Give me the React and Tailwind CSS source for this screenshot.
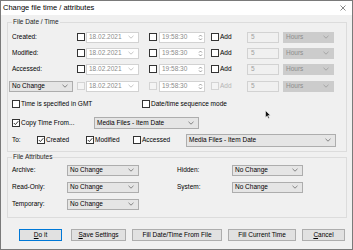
const Chevron = ({ color = '#6b6b6b' }) => (
  <svg width="6" height="4" viewBox="0 0 6 4" className="shrink-0">
    <path d="M0.5 0.8 L3 3.2 L5.5 0.8" fill="none" stroke={color} strokeWidth="0.8" />
  </svg>
)

const Box = ({ checked, disabled }) => (
  <span
    className={
      'w-[8px] h-[8px] shrink-0 border flex items-center justify-center ' +
      (disabled ? 'border-[#d4d4d4] bg-[#f4f4f4]' : 'border-[#333] bg-white')
    }
  >
    {checked && (
      <svg width="6" height="6" viewBox="0 0 6 6">
        <path d="M0.8 3 L2.4 4.6 L5.3 1.2" fill="none" stroke="#222" strokeWidth="0.9" />
      </svg>
    )}
  </span>
)

const Select = ({ text, w, h = 'h-[11px]', muted, className = '' }) => (
  <div
    className={
      'flex items-center justify-between shrink-0 border pl-[2px] pr-[4px] ' + h + ' ' + w + ' ' +
      (muted ? 'bg-[#cccccc] border-[#cccccc] text-[#8d8d8d] ' : 'bg-[#e5e5e5] border-[#adadad] text-black ') +
      className
    }
  >
    <span className="leading-none">{text}</span>
    <Chevron color={muted ? '#9a9a9a' : '#6b6b6b'} />
  </div>
)

const Spin = () => (
  <svg width="5" height="7" viewBox="0 0 5 7">
    <path d="M1 2.6 L2.5 1 L4 2.6" fill="none" stroke="#777" strokeWidth="0.7" />
    <path d="M1 4.4 L2.5 6 L4 4.4" fill="none" stroke="#777" strokeWidth="0.7" />
  </svg>
)

function FilaFecha({ label, disabled }) {
  return (
    <div className={'h-[16px] flex items-center ' + (label ? '' : 'mt-[1px]')}>
      <div className="w-[65px] shrink-0">
        {label ? <span>{label}</span> : <Select text="No Change" w="w-[64px]" className="-ml-[3px]" />}
      </div>
      <Box disabled={disabled} />
      <div className="ml-[1px] w-[53px] h-[11px] shrink-0 bg-white border border-[#d2d2d2] flex items-center justify-between pl-[2px] pr-[4px] text-[#8a8a8a]">
        <span className="leading-none">18.02.2021</span>
        <Chevron color="#b8b8b8" />
      </div>
      <div className="w-[10px] shrink-0" />
      <Box disabled={disabled} />
      <div className="ml-[2px] w-[46px] h-[11px] shrink-0 bg-white border border-[#d2d2d2] flex items-center justify-between pl-[2px] pr-[1px] text-[#8a8a8a]">
        <span className="leading-none">19:58:30</span>
        <Spin />
      </div>
      <div className="w-[6px] shrink-0" />
      <Box disabled={disabled} />
      <span className={'ml-[1px] w-[27px] shrink-0 ' + (disabled ? 'text-[#b5b5b5]' : '')}>Add</span>
      <div className="w-[32px] h-[11px] shrink-0 bg-[#f0f0f0] border border-[#d2d2d2] flex items-center pl-[3px] text-[#a0a0a0]">
        <span className="leading-none">5</span>
      </div>
      <Select text="Hours" w="w-[51px]" muted className="ml-[4px]" />
    </div>
  )
}

function Casilla({ checked, children, w }) {
  return (
    <div className={'flex items-center shrink-0 ' + (w || '')}>
      <Box checked={checked} />
      <span className="ml-[1px] whitespace-nowrap">{children}</span>
    </div>
  )
}

function Boton({ w, children, principal }) {
  return (
    <div
      className={
        'h-[12px] shrink-0 flex items-center justify-center bg-[#e1e1e1] border ' + w + ' ' +
        (principal ? 'border-[#0078d7]' : 'border-[#adadad]')
      }
    >
      {children}
    </div>
  )
}

export default function App() {
  return (
    <div
      className="w-[353px] h-[250px] border border-[#7a7a7a] bg-[#f0f0f0] flex flex-col text-[6.5px] text-black overflow-hidden relative"
      style={{ fontFamily: "'Liberation Sans', Arial, sans-serif" }}
    >
      {/* Barra de titulo */}
      <div className="h-[14px] shrink-0 bg-white flex items-center justify-between pl-[2px] pr-[6px]">
        <span className="text-[7.5px]">Change file time / attributes</span>
        <svg width="6" height="6" viewBox="0 0 6 6">
          <path d="M0.5 0.5 L5.5 5.5 M5.5 0.5 L0.5 5.5" stroke="#555" strokeWidth="0.7" />
        </svg>
      </div>

      <div className="pl-[6px] pr-[5px] pt-[2px] flex flex-col">
        {/* File Date / Time */}
        <fieldset className="border border-[#dcdcdc] pl-[4px] pb-[3px]">
          <legend className="ml-[0px] px-[1px] h-[10px] leading-[10px] text-[#222]">File Date / Time</legend>
          <div className="mt-[2px]" />
          <FilaFecha label="Created:" />
          <FilaFecha label="Modified:" />
          <FilaFecha label="Accessed:" />
          <FilaFecha disabled />

          <div className="mt-[2px] h-[16px] flex items-center">
            <Casilla w="w-[130px]">Time is specified in GMT</Casilla>
            <Casilla>Date/time sequence mode</Casilla>
          </div>

          <div className="mt-[3px] h-[16px] flex items-center">
            <Casilla checked w="w-[82px]">Copy Time From...</Casilla>
            <Select text="Media Files - Item Date" w="w-[105px]" h="h-[12px]" />
          </div>

          <div className="mt-[1px] h-[16px] flex items-center">
            <span className="w-[25px] shrink-0">To:</span>
            <Casilla checked w="w-[49px]">Created</Casilla>
            <Casilla checked w="w-[47px]">Modified</Casilla>
            <Casilla w="w-[53px]">Accessed</Casilla>
            <Select text="Media Files - Item Date" w="w-[150px]" h="h-[13px]" />
          </div>
        </fieldset>

        {/* File Attributes */}
        <fieldset className="border border-[#dcdcdc] pl-[4px] pb-[5px]">
          <legend className="px-[1px] h-[10px] leading-[10px] text-[#222]">File Attributes</legend>
          <div className="h-[16px] flex items-center">
            <span className="w-[55px] shrink-0">Archive:</span>
            <Select text="No Change" w="w-[72px]" />
            <span className="ml-[38px] w-[55px] shrink-0">Hidden:</span>
            <Select text="No Change" w="w-[71px]" />
          </div>
          <div className="mt-[1px] h-[16px] flex items-center">
            <span className="w-[55px] shrink-0">Read-Only:</span>
            <Select text="No Change" w="w-[72px]" />
            <span className="ml-[38px] w-[55px] shrink-0">System:</span>
            <Select text="No Change" w="w-[71px]" />
          </div>
          <div className="mt-[1px] h-[16px] flex items-center">
            <span className="w-[55px] shrink-0">Temporary:</span>
            <Select text="No Change" w="w-[72px]" />
          </div>
        </fieldset>

        {/* Botones */}
        <div className="mt-[11px] ml-[12px] flex items-center gap-[6px]">
          <Boton w="w-[43px]" principal><span><u>D</u>o it</span></Boton>
          <Boton w="w-[55px] ml-[3px]"><span><u>S</u>ave Settings</span></Boton>
          <Boton w="w-[90px]">Fill Date/Time From File</Boton>
          <Boton w="w-[68px]">Fill Current Time</Boton>
          <Boton w="w-[43px]"><span><u>C</u>ancel</span></Boton>
        </div>
      </div>

      {/* Cursor */}
      <svg width="6" height="9" viewBox="0 0 6 9" className="absolute left-[264px] top-[109px]">
        <path d="M0.5 0.5 L0.5 7.5 L2.2 5.9 L3.4 8.5 L4.4 8 L3.2 5.5 L5.5 5.5 Z" fill="#111" stroke="#fff" strokeWidth="0.5" />
      </svg>
    </div>
  )
}
